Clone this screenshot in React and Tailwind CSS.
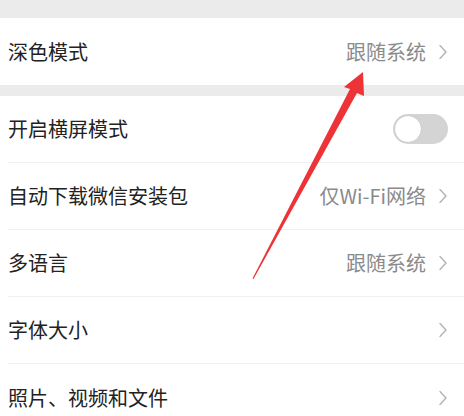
import React from 'react';

const Chevron = () => (
  <svg width="10" height="16" viewBox="0 0 10 16" className="ml-[12px] shrink-0">
    <path d="M2 1.5 L8 8 L2 14.5" fill="none" stroke="#b3b3b3" strokeWidth="1.4" strokeLinecap="round" strokeLinejoin="round" />
  </svg>
);

const Toggle = () => (
  <div className="w-[55px] h-[30px] rounded-full bg-[#d4d4d4] p-[2px] flex items-center">
    <div className="w-[26px] h-[26px] rounded-full bg-white shadow-[0_0_1px_rgba(0,0,0,0.25)]" />
  </div>
);

const Row = ({ label, value, toggle, last }) => (
  <div className="pl-2 bg-white">
    <div className={`h-[67px] flex items-center justify-between pr-[16px] ${last ? '' : 'border-b border-[#f0f0f0]'}`}>
      <span className="text-[20px] text-[#222]">{label}</span>
      {toggle ? (
        <Toggle />
      ) : (
        <div className="flex items-center">
          {value && <span className="text-[20px] text-[#8a8a8a]">{value}</span>}
          <Chevron />
        </div>
      )}
    </div>
  </div>
);

export default function App() {
  return (
    <div
      className="relative w-[464px] h-[416px] overflow-hidden bg-[#ebebeb]"
      style={{ fontFamily: '"Noto Sans CJK SC", "Noto Sans", sans-serif' }}
    >
      <div className="h-[18px]" />
      <Row label="深色模式" value="跟随系统" last />
      <div className="h-[11px]" />
      <Row label="开启横屏模式" toggle />
      <Row label="自动下载微信安装包" value="仅Wi-Fi网络" />
      <Row label="多语言" value="跟随系统" />
      <Row label="字体大小" />
      <Row label="照片、视频和文件" last />

      {/* red annotation arrow */}
      <svg className="absolute inset-0 pointer-events-none" width="464" height="416">
        <polygon
          points="363,72 364,96 357,93 253.5,279 252.5,278.5 350,89 344,87"
          fill="#ee3338"
        />
      </svg>
    </div>
  );
}
